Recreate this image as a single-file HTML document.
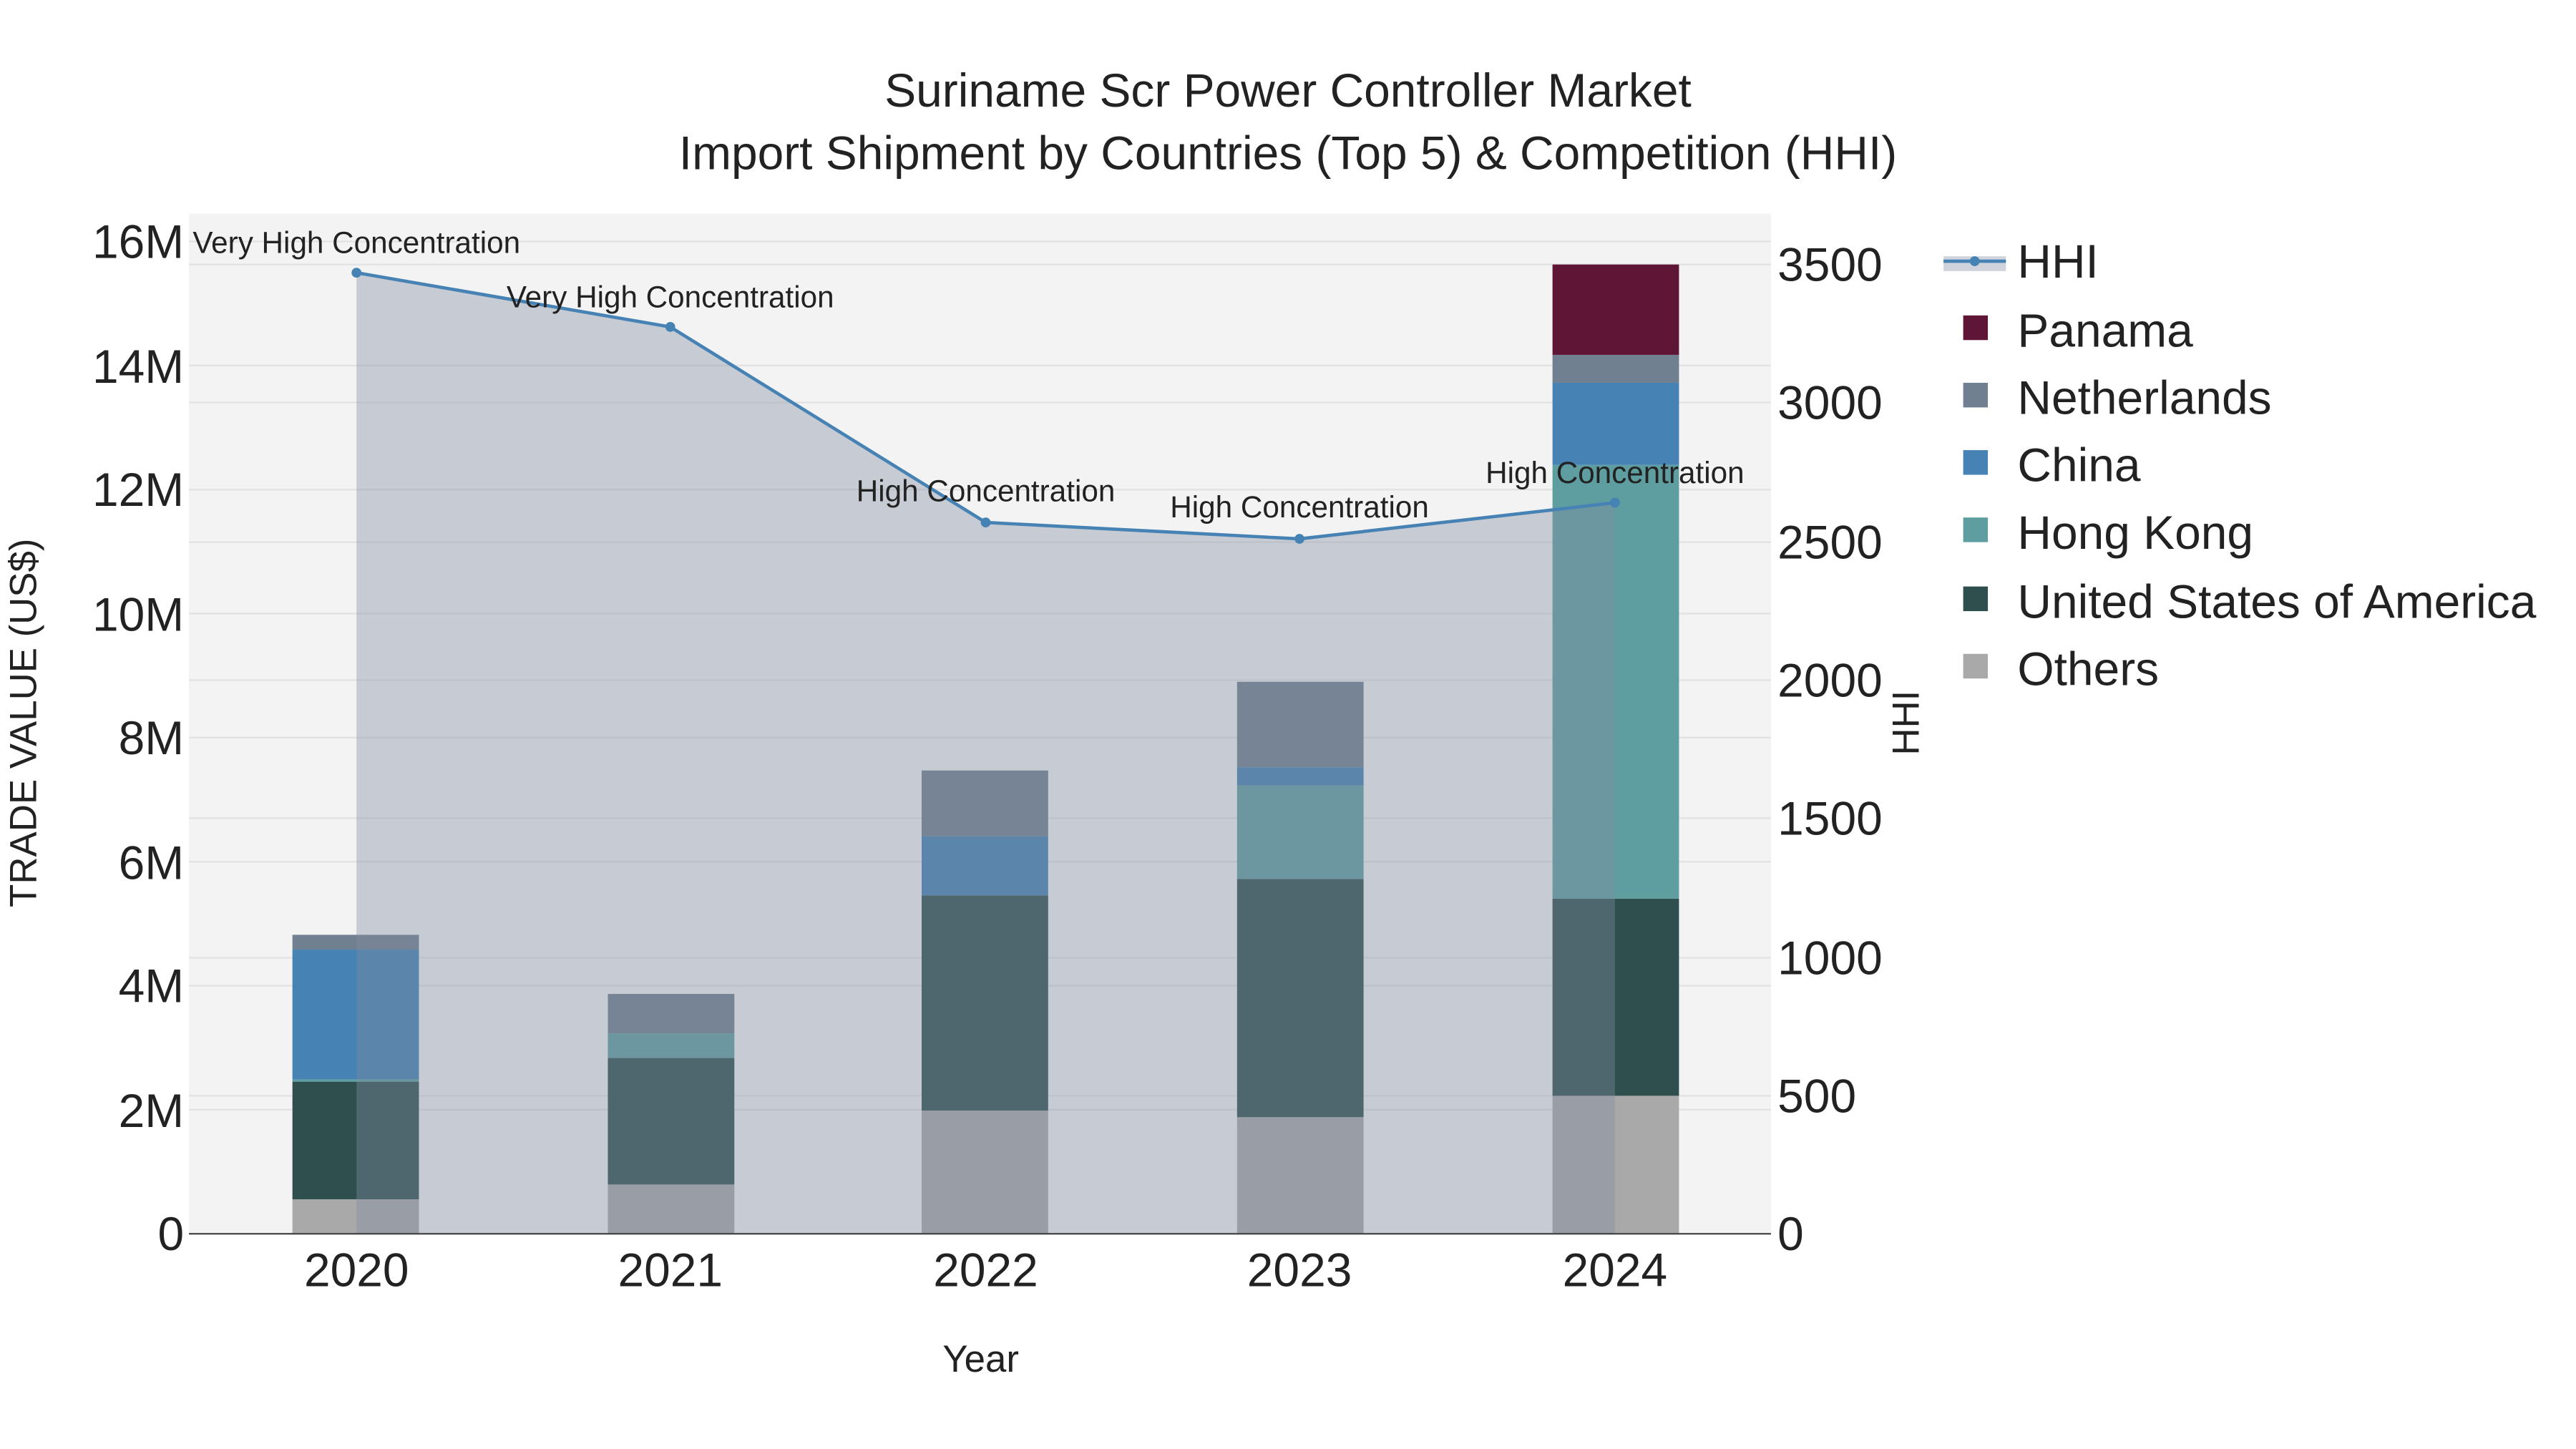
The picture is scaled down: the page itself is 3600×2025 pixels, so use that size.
<!DOCTYPE html>
<html><head><meta charset="utf-8"><style>
html,body{margin:0;padding:0;background:#fff;}
svg{display:block;}
text{font-family:"Liberation Sans",sans-serif;fill:#222;}
</style></head><body>
<svg width="3600" height="2025" viewBox="0 0 1568 882" preserveAspectRatio="none" xmlns="http://www.w3.org/2000/svg">
<rect x="0" y="0" width="1568" height="882" fill="#fff"/>
<rect x="115" y="130" width="963" height="621" fill="#f3f3f3"/>
<g stroke="#e2e2e2" stroke-width="1">
<line x1="115" x2="1078" y1="675.5" y2="675.5"/><line x1="115" x2="1078" y1="600" y2="600"/>
<line x1="115" x2="1078" y1="524.5" y2="524.5"/><line x1="115" x2="1078" y1="449" y2="449"/>
<line x1="115" x2="1078" y1="373.5" y2="373.5"/><line x1="115" x2="1078" y1="298" y2="298"/>
<line x1="115" x2="1078" y1="222.5" y2="222.5"/><line x1="115" x2="1078" y1="147" y2="147"/>
<line x1="115" x2="1078" y1="667" y2="667"/><line x1="115" x2="1078" y1="583" y2="583"/>
<line x1="115" x2="1078" y1="498" y2="498"/><line x1="115" x2="1078" y1="414" y2="414"/>
<line x1="115" x2="1078" y1="330" y2="330"/><line x1="115" x2="1078" y1="245" y2="245"/>
<line x1="115" x2="1078" y1="161" y2="161"/>
</g>
<g>
<rect x="178" y="730" width="77" height="21" fill="#a9a9a9"/>
<rect x="178" y="658" width="77" height="72" fill="#2f4f4f"/>
<rect x="178" y="657" width="77" height="1.5" fill="#5f9ea0"/>
<rect x="178" y="578" width="77" height="79" fill="#4682b4"/>
<rect x="178" y="569" width="77" height="9" fill="#708090"/>

<rect x="370" y="721" width="77" height="30" fill="#a9a9a9"/>
<rect x="370" y="644" width="77" height="77" fill="#2f4f4f"/>
<rect x="370" y="629" width="77" height="15" fill="#5f9ea0"/>
<rect x="370" y="605" width="77" height="24" fill="#708090"/>

<rect x="561" y="676" width="77" height="75" fill="#a9a9a9"/>
<rect x="561" y="545" width="77" height="131" fill="#2f4f4f"/>
<rect x="561" y="509" width="77" height="36" fill="#4682b4"/>
<rect x="561" y="469" width="77" height="40" fill="#708090"/>

<rect x="753" y="680" width="77" height="71" fill="#a9a9a9"/>
<rect x="753" y="535" width="77" height="145" fill="#2f4f4f"/>
<rect x="753" y="478" width="77" height="57" fill="#5f9ea0"/>
<rect x="753" y="467" width="77" height="11" fill="#4682b4"/>
<rect x="753" y="415" width="77" height="52" fill="#708090"/>

<rect x="945" y="667" width="77" height="84" fill="#a9a9a9"/>
<rect x="945" y="547" width="77" height="120" fill="#2f4f4f"/>
<rect x="945" y="283" width="77" height="264" fill="#5f9ea0"/>
<rect x="945" y="233" width="77" height="50" fill="#4682b4"/>
<rect x="945" y="216" width="77" height="17" fill="#708090"/>
<rect x="945" y="161" width="77" height="55" fill="#5f1535"/>
</g>
<polygon points="217,166 408,199 600,318 791,328 983,306 983,751 217,751" fill="rgb(130,140,161)" fill-opacity="0.38"/>
<polyline points="217,166 408,199 600,318 791,328 983,306" fill="none" stroke="#4682b4" stroke-width="2"/>
<g fill="#4682b4"><circle cx="217" cy="166" r="3"/><circle cx="408" cy="199" r="3"/><circle cx="600" cy="318" r="3"/><circle cx="791" cy="328" r="3"/><circle cx="983" cy="306" r="3"/></g>
<line x1="115" x2="1078" y1="751" y2="751" stroke="#444" stroke-width="1"/>
<g font-size="18.4" text-anchor="middle">
<text x="217" y="154">Very High Concentration</text>
<text x="408" y="187">Very High Concentration</text>
<text x="600" y="305">High Concentration</text>
<text x="791" y="315">High Concentration</text>
<text x="983" y="294">High Concentration</text>
</g>
<g font-size="28.7" text-anchor="middle">
<text x="784" y="65">Suriname Scr Power Controller Market</text>
<text x="784" y="103">Import Shipment by Countries (Top 5) &amp; Competition (HHI)</text>
</g>
<g font-size="28.7" text-anchor="end">
<text x="112" y="761">0</text><text x="112" y="686">2M</text><text x="112" y="610">4M</text>
<text x="112" y="535">6M</text><text x="112" y="459">8M</text><text x="112" y="384">10M</text>
<text x="112" y="308">12M</text><text x="112" y="233">14M</text><text x="112" y="157">16M</text>
</g>
<g font-size="28.7" text-anchor="start">
<text x="1082" y="761">0</text><text x="1082" y="677">500</text><text x="1082" y="593">1000</text>
<text x="1082" y="508">1500</text><text x="1082" y="424">2000</text><text x="1082" y="340">2500</text>
<text x="1082" y="255">3000</text><text x="1082" y="171">3500</text>
</g>
<g font-size="28.7" text-anchor="middle">
<text x="217" y="783">2020</text><text x="408" y="783">2021</text><text x="600" y="783">2022</text>
<text x="791" y="783">2023</text><text x="983" y="783">2024</text>
</g>
<text x="597" y="835" font-size="23" text-anchor="middle">Year</text>
<text transform="translate(22,440) rotate(-90)" font-size="23" text-anchor="middle">TRADE VALUE (US$)</text>
<text transform="translate(1168,440) rotate(-90)" font-size="23" text-anchor="middle">HHI</text>
<rect x="1183" y="156" width="38" height="9" fill="rgb(130,140,161)" fill-opacity="0.38"/>
<line x1="1183" x2="1221" y1="159" y2="159" stroke="#4682b4" stroke-width="2"/>
<circle cx="1202" cy="159" r="3" fill="#4682b4"/>
<rect x="1195" y="192" width="15" height="15" fill="#5f1535"/>
<rect x="1195" y="233" width="15" height="15" fill="#708090"/>
<rect x="1195" y="274" width="15" height="15" fill="#4682b4"/>
<rect x="1195" y="315" width="15" height="15" fill="#5f9ea0"/>
<rect x="1195" y="357" width="15" height="15" fill="#2f4f4f"/>
<rect x="1195" y="398" width="15" height="15" fill="#a9a9a9"/>
<g font-size="28.7">
<text x="1228" y="169">HHI</text><text x="1228" y="211">Panama</text><text x="1228" y="252">Netherlands</text>
<text x="1228" y="293">China</text><text x="1228" y="334">Hong Kong</text>
<text x="1228" y="376">United States of America</text><text x="1228" y="417">Others</text>
</g>
</svg>
</body></html>
